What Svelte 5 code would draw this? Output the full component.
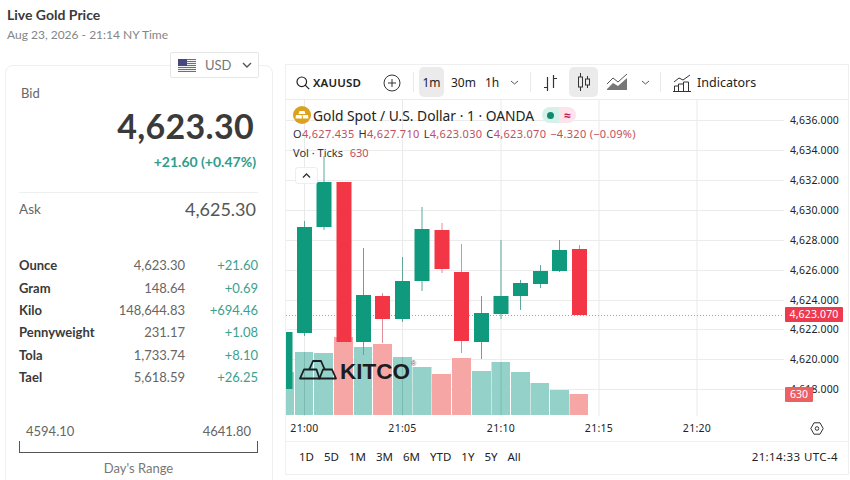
<script lang="ts">
  const units = [
    ['Ounce', '4,623.30', '+21.60'],
    ['Gram', '148.64', '+0.69'],
    ['Kilo', '148,644.83', '+694.46'],
    ['Pennyweight', '231.17', '+1.08'],
    ['Tola', '1,733.74', '+8.10'],
    ['Tael', '5,618.59', '+26.25']
  ];

  const ranges = ['1D', '5D', '1M', '3M', '6M', 'YTD', '1Y', '5Y', 'All'];

  // centre x, wick top, body top, body bottom, wick bottom, up
  const candles = [
    [285, 332, 332, 389, 389, 1],
    [304.5, 221, 227, 333, 336, 1],
    [324, 156, 182, 227, 230, 1],
    [344, 182, 182, 342, 342, 0],
    [363.5, 248, 295, 342, 355, 1],
    [382.5, 293, 296, 319, 343, 0],
    [402.5, 257, 281, 319, 322, 1],
    [422, 207, 229, 281, 291, 1],
    [442, 223, 230, 269, 273, 0],
    [461.5, 244, 272, 341, 353, 0],
    [481.5, 296, 313, 342, 359, 1],
    [501, 240, 296, 314, 319, 1],
    [520.5, 280, 283, 296, 310, 1],
    [540.5, 265, 271, 284, 288, 1],
    [559.5, 240, 250, 271, 272, 1],
    [579.5, 245, 249, 315, 315, 0]
  ];

  // left, right, top, up
  const volumes = [
    [286, 294, 372, 1],
    [295, 313, 352, 1],
    [314, 333, 353, 1],
    [334, 353, 337, 0],
    [354, 372, 347, 1],
    [373, 392, 344, 0],
    [393, 412, 357, 1],
    [412.5, 431.5, 367, 1],
    [432, 451, 374, 0],
    [452, 471, 358, 0],
    [472, 491, 371, 1],
    [491.5, 510, 362, 1],
    [511, 530, 372, 1],
    [530.5, 549, 383, 1],
    [550, 569, 390, 1],
    [569.5, 588, 394, 0]
  ];

  const prices = ['4,636.000', '4,634.000', '4,632.000', '4,630.000', '4,628.000', '4,626.000', '4,624.000', '4,622.000', '4,620.000', '4,618.000'];
  const gridY = prices.map((_, i) => Math.round(120.3 + i * 29.88) + 0.5);
  const times = [
    [304.5, '21:00'],
    [402.5, '21:05'],
    [501, '21:10'],
    [599, '21:15'],
    [697, '21:20']
  ];
</script>

<div class="page">
  <aside class="side">
    <h1>Live Gold Price</h1>
    <p class="date">Aug 23, 2026 - 21:14 NY Time</p>

    <div class="card">
      <div class="currency">
        <svg width="18" height="13" viewBox="0 0 18 13">
          <rect width="18" height="13" fill="#f2f2f2" />
          <path d="M0 .5h18M0 2.5h18M0 4.5h18M0 6.5h18M0 8.5h18M0 10.5h18M0 12.5h18" stroke="#c8475a" stroke-width="1" />
          <rect width="9" height="7" fill="#45477e" />
        </svg>
        <span>USD</span>
        <svg width="10" height="6" viewBox="0 0 10 6"><path d="M1 1l4 4 4-4" fill="none" stroke="#555" stroke-width="1.4" /></svg>
      </div>

      <div class="bid">Bid</div>
      <div class="big">4,623.30</div>
      <div class="change">+21.60 (+0.47%)</div>
      <div class="ask"><span>Ask</span><b>4,625.30</b></div>

      <div class="units">
        {#each units as [name, value, diff]}
          <b>{name}</b><span class="val">{value}</span><span class="diff">{diff}</span>
        {/each}
      </div>

      <div class="range-vals"><span>4594.10</span><span>4641.80</span></div>
      <div class="range-bar"></div>
      <div class="range-label">Day's Range</div>
    </div>
  </aside>

  <section class="widget">
    <div class="toolbar">
      <svg class="search" width="14" height="14" viewBox="0 0 14 14"><circle cx="5.8" cy="5.8" r="4.8" fill="none" stroke="#222" stroke-width="1.2" /><path d="M9.2 9.2l4 4" stroke="#222" stroke-width="1.2" /></svg>
      <span class="symbol">XAUUSD</span>
      <svg class="plus" width="18" height="18" viewBox="0 0 18 18"><circle cx="9" cy="9" r="8" fill="none" stroke="#333" /><path d="M9 5v8M5 9h8" stroke="#333" /></svg>
      <i class="sep s1"></i>
      <span class="tf active">1m</span>
      <span class="tf t30">30m</span>
      <span class="tf t1h">1h</span>
      <svg class="chev c1" width="9" height="5" viewBox="0 0 9 5"><path d="M1 1l3.5 3L8 1" fill="none" stroke="#555" /></svg>
      <i class="sep s2"></i>
      <svg class="bars" width="15" height="18" viewBox="0 0 15 18"><path d="M4.5 3v14M1 13.5h3.5M10.500 1v13M10.500 4.500H14" fill="none" stroke="#333" stroke-width="1.200" /></svg>
      <span class="candle-btn">
        <svg width="14" height="20" viewBox="0 0 14 20"><path d="M3.500 1v4M3.500 15v4M10.500 4v3M10.500 13v3" stroke="#333" /><rect x="1.500" y="5" width="4" height="10" fill="none" stroke="#333" /><rect x="8.500" y="7" width="4" height="6" fill="none" stroke="#333" /></svg>
      </span>
      <svg class="area" width="23" height="18" viewBox="0 0 23 18"><path d="M1 11l6-6 5 4 9-8" fill="none" stroke="#555" /><path d="M1 16l6-6 5 3 9-8v12H1z" fill="#777" /></svg>
      <svg class="chev c2" width="9" height="5" viewBox="0 0 9 5"><path d="M1 1l3.5 3L8 1" fill="none" stroke="#555" /></svg>
      <i class="sep s3"></i>
      <svg class="ind" width="18" height="18" viewBox="0 0 18 18"><path d="M1 8l5-4 4 2 7-5" fill="none" stroke="#333" /><path d="M1.500 17v-5h4v5M5.500 17v-7h5v7M10.500 17V8h5v9M0 17.500h18" fill="none" stroke="#333" /></svg>
      <span class="ind-label">Indicators</span>
    </div>

    <div class="canvas">
      <svg class="plot" width="562" height="316" viewBox="286 100 562 316">
        {#each gridY as y}
          <line x1="286" x2="784" y1={y} y2={y} stroke="#ececec" />
        {/each}
        {#each times as [x]}
          <line x1={x} x2={x} y1="100" y2="416" stroke="#e9e9e9" />
        {/each}
        {#each volumes as [l, r, t, up]}
          <rect x={l} y={t} width={r - l} height={415 - t} fill={up ? '#94d2c9' : '#f7a6a6'} />
          {#each times as [x]}
            {#if Number(x) > l && Number(x) < r}
              <line x1={x} x2={x} y1={t} y2="415" stroke="#4a8f86" stroke-opacity="0.35" />
            {/if}
          {/each}
        {/each}
        <line x1="286" x2="784" y1="315.5" y2="315.5" stroke="#d78a92" stroke-dasharray="1 2" />
        {#each candles as [x, wt, bt, bb, wb, up]}
          <line x1={x} x2={x} y1={wt} y2={wb} stroke={up ? '#5fa79c' : '#e58d96'} />
          <rect x={Number(x) - 7.5} y={bt} width="15" height={Number(bb) - Number(bt)} fill={up ? '#0f9a7e' : '#f23645'} />
        {/each}
        <rect x="286" y="332" width="6" height="57" fill="#0f9a7e" />
        <g fill="none" stroke="#1b1d20" stroke-width="1.800" stroke-linejoin="round">
          <path d="M309.500 369L313 361h8l3.500 8" />
          <path d="M300 378.500L304 369.500h12.500l3 9z" />
          <path d="M319.500 378.500L323 369.500h9l4 9z" />
        </g>
        <text class="kitco" x="340" y="379">KITCO</text>
        <text class="reg" x="411" y="366">®</text>
      </svg>

      <div class="legend">
        <div class="title">
          <svg width="18" height="18" viewBox="0 0 18 18"><circle cx="9" cy="9" r="9" fill="#dca21f" /><path d="M6.500 5h5l1 3h-7zM3 9h5.500l.5 3.500H2.500zM9.500 9H15l.5 3.500H10z" fill="#fff" /></svg>
          <span>Gold Spot / U.S. Dollar · 1 · OANDA</span>
          <span class="status"><em class="on"><i></i></em><em class="off">≈</em></span>
        </div>
        <div class="ohlc">
          <span>O<b>4,627.435</b></span>
          <span>H<b>4,627.710</b></span>
          <span>L<b>4,623.030</b></span>
          <span>C<b>4,623.070</b></span>
          <b>−4.320 (−0.09%)</b>
        </div>
        <div class="vol">Vol · Ticks <b>630</b></div>
        <div class="collapse"><svg width="9" height="5" viewBox="0 0 9 5"><path d="M1 4.500L4.500 1 8 4.500" fill="none" stroke="#333" stroke-width="1.300" /></svg></div>
      </div>

      <div class="axis">
        {#each prices as p, i}
          <span class="price" style="top:{gridY[i] - 109}px">{p}</span>
        {/each}
        <span class="tag last">4,623.070</span>
        <span class="tag vol-tag">630</span>
      </div>
    </div>

    <div class="times">
      {#each times as [x, t]}
        <span style="left:{Number(x) - 286}px">{t}</span>
      {/each}
      <svg class="gear" width="14" height="13" viewBox="0 0 14 13"><path d="M4 .800h6l3.200 5.700L10 12.200H4L.800 6.500z" fill="none" stroke="#333" /><circle cx="7" cy="6.500" r="1.800" fill="none" stroke="#333" /></svg>
    </div>

    <div class="footer">
      <div class="ranges">
        {#each ranges as r}
          <span>{r}</span>
        {/each}
      </div>
      <span class="clock">21:14:33 UTC-4</span>
    </div>
  </section>
</div>

<style>
  :global(body) {
    background: #fff;
    overflow: hidden;
  }
  .page {
    display: flex;
    width: 850px;
    height: 480px;
    overflow: hidden;
    padding-left: 5px;
    box-sizing: border-box;
    gap: 13px;
    font-family: Lato, "Open Sans", sans-serif;
    color: #333;
  }

  .side {
    width: 268px;
    flex: none;
  }
  h1 {
    margin: 6px 0 0 2px;
    font-size: 14px;
    line-height: 17px;
    font-weight: 700;
    color: #3a3a3a;
  }
  .date {
    margin: 4px 0 0 2px;
    font-size: 12px;
    line-height: 16px;
    color: #858585;
  }
  .card {
    position: relative;
    margin-top: 22px;
    height: 430px;
    box-sizing: border-box;
    border: 1px solid #efefef;
    border-radius: 8px;
    padding: 0 14px 0 13px;
  }
  .currency {
    position: absolute;
    left: 164px;
    top: -14px;
    width: 89px;
    height: 26px;
    box-sizing: border-box;
    display: flex;
    align-items: center;
    gap: 9px;
    padding-left: 7px;
    background: #fff;
    border: 1px solid #e6e6e6;
    border-radius: 2px;
    font-size: 13px;
    color: #777;
  }
  .currency span {
    margin-right: 1px;
  }
  .bid {
    margin: 19px 0 0 2px;
    font-size: 13px;
    line-height: 16px;
    color: #666;
  }
  .big {
    margin-top: 5px;
    padding-right: 4px;
    text-align: right;
    font-size: 34px;
    line-height: 40px;
    font-weight: 700;
    color: #3a3a3a;
    letter-spacing: 0.3px;
  }
  .change {
    margin-top: 7px;
    padding-right: 2px;
    text-align: right;
    font-size: 14px;
    line-height: 18px;
    font-weight: 700;
    color: #2f9d8b;
  }
  .ask {
    display: flex;
    justify-content: space-between;
    align-items: center;
    margin-top: 21px;
    height: 32px;
    border-top: 1px solid #efefef;
    padding-right: 2px;
    font-size: 13.5px;
    color: #666;
  }
  .ask b {
    font-size: 18px;
    font-weight: 400;
    color: #555;
  }
  .units {
    display: grid;
    grid-template-columns: 1fr auto 73px;
    grid-auto-rows: 22.4px;
    align-items: center;
    margin-top: 29px;
    font-size: 13px;
  }
  .units b {
    color: #3a3a3a;
  }
  .val {
    text-align: right;
    color: #666;
  }
  .diff {
    text-align: right;
    color: #3b9f8f;
  }
  .range-vals {
    display: flex;
    justify-content: space-between;
    margin-top: 35px;
    padding: 0 7px;
    font-size: 13px;
    line-height: 16px;
    color: #666;
  }
  .range-bar {
    margin-top: 2px;
    height: 11px;
    border: 1px solid #555;
    border-top: 0;
  }
  .range-label {
    margin-top: 7px;
    text-align: center;
    font-size: 13px;
    line-height: 16px;
    color: #777;
  }

  .widget {
    position: relative;
    margin-top: 65px;
    width: 562px;
    height: 409px;
    flex: none;
    box-sizing: border-box;
    font-family: "Noto Sans", "Open Sans", sans-serif;
    color: #222;
    outline: 1px solid #efefef;
  }
  .toolbar {
    position: relative;
    height: 35px;
    border-bottom: 1px solid #ececec;
    box-sizing: border-box;
    font-size: 12px;
  }
  .toolbar > * {
    position: absolute;
  }
  .search { left: 10px; top: 11px; }
  .symbol { left: 27px; top: 10px; font-weight: 600; font-size: 11.5px; line-height: 16px; letter-spacing: 0.2px; }
  .plus { left: 97px; top: 9px; }
  .sep { width: 1px; height: 20px; top: 7px; background: #e9e9e9; }
  .s1 { left: 127px; }
  .s2 { left: 244px; }
  .s3 { left: 374px; }
  .tf { top: 2px; height: 30px; line-height: 31px; font-size: 12px; }
  .tf.active { left: 133px; width: 25px; text-align: center; background: #ebebeb; border-radius: 5px; }
  .t30 { left: 165px; }
  .t1h { left: 199px; }
  .chev { top: 15px; }
  .c1 { left: 224px; }
  .c2 { left: 355px; }
  .bars { left: 257px; top: 9px; }
  .candle-btn { left: 283px; top: 2px; width: 29px; height: 30px; display: grid; place-items: center; background: #ebebeb; border-radius: 5px; }
  .area { left: 320px; top: 8px; }
  .ind { left: 387px; top: 9px; }
  .ind-label { left: 411px; top: 9px; font-size: 12.5px; line-height: 17px; }

  .canvas {
    position: relative;
    height: 316px;
  }
  .plot {
    display: block;
  }
  .kitco {
    font-family: "Liberation Sans", sans-serif;
    font-size: 22.5px;
    font-weight: 700;
    fill: #1b1d20;
  }
  .reg {
    font-family: "Liberation Sans", sans-serif;
    font-size: 7px;
    fill: #555;
  }
  .legend {
    position: absolute;
    left: 7px;
    top: 6px;
  }
  .title {
    display: flex;
    align-items: center;
    gap: 2px;
    height: 18px;
    font-size: 13.8px;
    color: #222;
    white-space: nowrap;
  }
  .status {
    display: flex;
    margin-left: 6px;
    height: 16px;
  }
  .status em {
    display: grid;
    place-items: center;
    width: 17px;
    font-style: normal;
    font-size: 12px;
    font-weight: 700;
  }
  .on {
    background: #d6f0ea;
    border-radius: 8px 0 0 8px;
  }
  .on i {
    width: 7px;
    height: 7px;
    border-radius: 50%;
    background: #0f8a70;
  }
  .off {
    background: #fde4ec;
    color: #c2185b;
    border-radius: 0 8px 8px 0;
  }
  .ohlc {
    display: flex;
    gap: 4px;
    margin-top: 1px;
    height: 17px;
    align-items: center;
    font-size: 11px;
    letter-spacing: 0.3px;
    white-space: nowrap;
    color: #333;
  }
  .ohlc b, .vol b {
    font-weight: 400;
    color: #c0505e;
  }
  .vol {
    margin-top: 2px;
    height: 17px;
    line-height: 17px;
    font-size: 11px;
    color: #333;
  }
  .vol b {
    margin-left: 4px;
  }
  .collapse {
    display: grid;
    place-items: center;
    margin: 6px 0 0 2px;
    width: 23px;
    height: 17px;
    box-sizing: border-box;
    background: #fff;
    border: 1px solid #eee;
    border-radius: 3px;
  }
  .axis {
    position: absolute;
    left: 498px;
    top: 0;
    width: 64px;
    height: 316px;
  }
  .price {
    position: absolute;
    right: 9px;
    font-size: 10.5px;
    line-height: 16px;
    letter-spacing: 0.15px;
    color: #222;
    white-space: nowrap;
  }
  .tag {
    position: absolute;
    left: 1px;
    display: block;
    height: 15px;
    line-height: 15px;
    text-align: center;
    color: #fff;
    font-size: 10.5px;
    border-radius: 1px;
  }
  .last {
    top: 207px;
    width: 58px;
    background: #ee3a4e;
    letter-spacing: 0.15px;
  }
  .vol-tag {
    top: 287px;
    width: 28px;
    background: #ec5f62;
  }

  .times {
    position: relative;
    height: 25px;
    border-bottom: 1px solid #f0f0f0;
    font-size: 10.5px;
    line-height: 25px;
    letter-spacing: 0.3px;
  }
  .times span {
    position: absolute;
    top: 0;
    transform: translateX(-50%);
  }
  .gear {
    position: absolute;
    left: 524px;
    top: 6px;
  }
  .footer {
    display: flex;
    justify-content: space-between;
    align-items: center;
    height: 32px;
    padding: 0 10px 4px 13px;
    box-sizing: border-box;
    font-size: 11.5px;
  }
  .ranges {
    display: flex;
    gap: 10px;
  }
  .clock {
    letter-spacing: 0.4px;
  }
</style>
